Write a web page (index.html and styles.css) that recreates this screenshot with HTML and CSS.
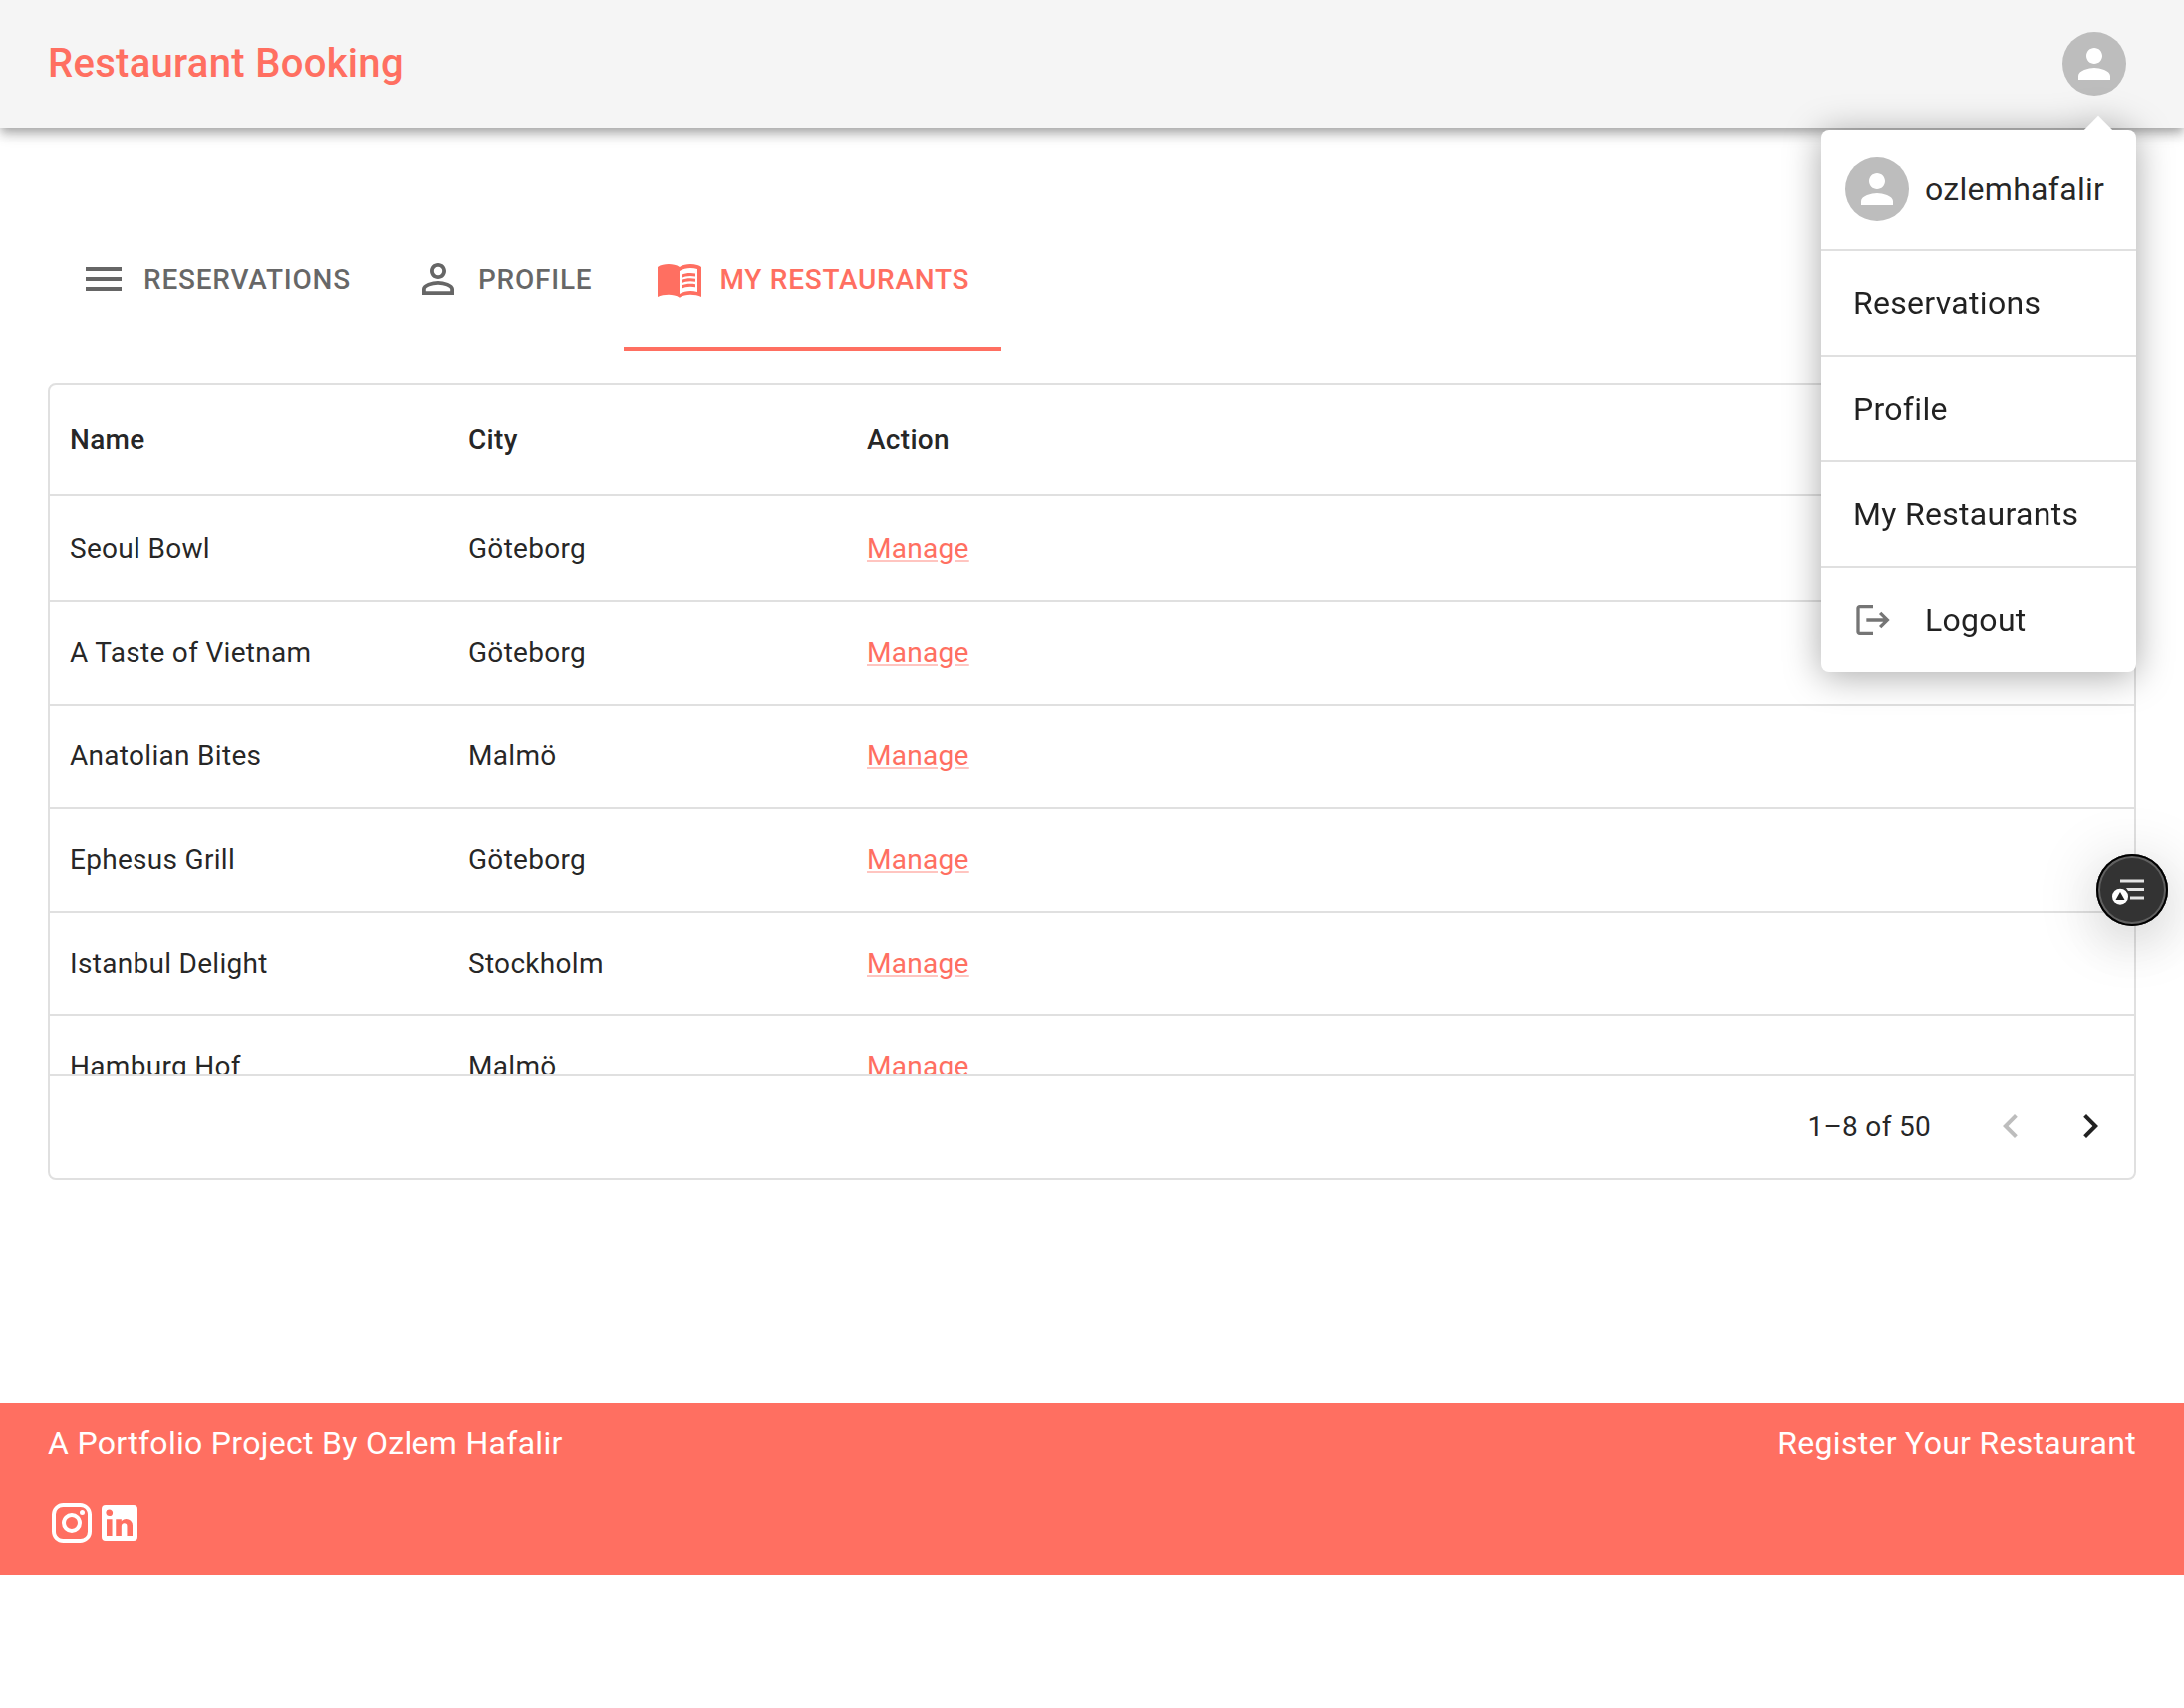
FILE: index.html
```html
<!DOCTYPE html>
<html lang="en">
<head>
<meta charset="utf-8">
<title>Restaurant Booking</title>
<link rel="stylesheet" href="styles.css">
</head>
<body>
<header class="app-bar">
  <a class="brand">Restaurant Booking</a>
  <span class="avatar"><svg class="icon" viewBox="0 0 24 24"><path d="M12 12c2.21 0 4-1.79 4-4s-1.79-4-4-4-4 1.79-4 4 1.79 4 4 4m0 2c-2.67 0-8 1.34-8 4v2h16v-2c0-2.66-5.33-4-8-4"/></svg></span>
</header>

<main class="content">
  <nav class="tabs">
    <a class="tab"><svg class="icon" viewBox="0 0 24 24"><path d="M3 18h18v-2H3zm0-5h18v-2H3zm0-7v2h18V6z"/></svg><span class="tab-label">Reservations</span></a>
    <a class="tab"><svg class="icon" viewBox="0 0 24 24"><path d="M12 5.9a2.1 2.1 0 1 1 0 4.2 2.1 2.1 0 0 1 0-4.2m0 9c2.97 0 6.1 1.46 6.1 2.1v1.1H5.9V17c0-.64 3.13-2.1 6.1-2.1M12 4C9.79 4 8 5.79 8 8s1.79 4 4 4 4-1.79 4-4-1.79-4-4-4m0 9c-2.67 0-8 1.34-8 4v3h16v-3c0-2.66-5.33-4-8-4"/></svg><span class="tab-label">Profile</span></a>
    <a class="tab tab-active"><svg class="icon" viewBox="0 0 24 24"><path d="M21 5c-1.11-.35-2.33-.5-3.5-.5-1.95 0-4.05.4-5.5 1.5-1.45-1.1-3.55-1.5-5.5-1.5S2.45 4.9 1 6v15c1.45-.7 3.55-1.1 5.5-1.1s4.05.4 5.5 1.5c1.45-1.1 3.55-1.5 5.5-1.5s4.05.4 5.5 1.1V6c-.6-.45-1.25-.75-2-1m0 13.5c-1.1-.35-2.3-.5-3.5-.5-1.7 0-4.15.65-5.5 1.5V8c1.35-.85 3.8-1.5 5.5-1.5 1.2 0 2.4.15 3.5.5z"/><path d="M17.5 10.5c.88 0 1.73.09 2.5.26V9.24c-.79-.15-1.64-.24-2.5-.24-1.7 0-3.24.29-4.5.83v1.66c1.13-.64 2.7-.99 4.5-.99M13 12.49v1.66c1.13-.64 2.7-.99 4.5-.99.88 0 1.73.09 2.5.26V11.9c-.79-.15-1.64-.24-2.5-.24-1.7 0-3.24.3-4.5.83m4.5 1.84c-1.7 0-3.24.29-4.5.83v1.66c1.13-.64 2.7-.99 4.5-.99.88 0 1.73.09 2.5.26v-1.52c-.79-.16-1.64-.24-2.5-.24"/></svg><span class="tab-label">My Restaurants</span></a>
  </nav>

  <section class="grid">
    <div class="row head"><span>Name</span><span>City</span><span>Action</span></div>
    <div class="rows">
      <div class="row"><span>Seoul Bowl</span><span>Göteborg</span><span><a class="link">Manage</a></span></div>
      <div class="row"><span>A Taste of Vietnam</span><span>Göteborg</span><span><a class="link">Manage</a></span></div>
      <div class="row"><span>Anatolian Bites</span><span>Malmö</span><span><a class="link">Manage</a></span></div>
      <div class="row"><span>Ephesus Grill</span><span>Göteborg</span><span><a class="link">Manage</a></span></div>
      <div class="row"><span>Istanbul Delight</span><span>Stockholm</span><span><a class="link">Manage</a></span></div>
      <div class="row"><span>Hamburg Hof</span><span>Malmö</span><span><a class="link">Manage</a></span></div>
    </div>
    <div class="pager">
      <span class="range">1–8 of 50</span>
      <span class="page-btn disabled"><svg class="icon" viewBox="0 0 24 24"><path d="M15.41 16.59 10.83 12l4.58-4.59L14 6l-6 6 6 6z"/></svg></span>
      <span class="page-btn"><svg class="icon" viewBox="0 0 24 24"><path d="M8.59 16.59 13.17 12 8.59 7.41 10 6l6 6-6 6z"/></svg></span>
    </div>
  </section>
</main>

<footer class="footer">
  <div class="footer-text"><span>A Portfolio Project By Ozlem Hafalir</span><a>Register Your Restaurant</a></div>
  <div class="social">
    <svg class="icon" viewBox="0 0 24 24"><path d="M7.8 2h8.4C19.4 2 22 4.6 22 7.8v8.4a5.8 5.8 0 0 1-5.8 5.8H7.8C4.6 22 2 19.4 2 16.2V7.8A5.8 5.8 0 0 1 7.8 2m-.2 2A3.6 3.6 0 0 0 4 7.6v8.8C4 18.39 5.61 20 7.6 20h8.8a3.6 3.6 0 0 0 3.6-3.6V7.6C20 5.61 18.39 4 16.4 4H7.6m9.65 1.5a1.25 1.25 0 0 1 1.25 1.25A1.25 1.25 0 0 1 17.25 8 1.25 1.25 0 0 1 16 6.75a1.25 1.25 0 0 1 1.25-1.25M12 7a5 5 0 0 1 5 5 5 5 0 0 1-5 5 5 5 0 0 1-5-5 5 5 0 0 1 5-5m0 2a3 3 0 0 0-3 3 3 3 0 0 0 3 3 3 3 0 0 0 3-3 3 3 0 0 0-3-3z"/></svg>
    <svg class="icon" viewBox="0 0 24 24"><path d="M19 3a2 2 0 0 1 2 2v14a2 2 0 0 1-2 2H5a2 2 0 0 1-2-2V5a2 2 0 0 1 2-2h14m-.5 15.5v-5.3a3.26 3.26 0 0 0-3.26-3.26c-.85 0-1.84.52-2.32 1.3v-1.11h-2.79v8.37h2.79v-4.93c0-.77.62-1.4 1.39-1.4a1.4 1.4 0 0 1 1.4 1.4v4.93h2.79M6.88 8.56a1.68 1.68 0 0 0 1.68-1.68c0-.93-.75-1.69-1.68-1.69a1.69 1.69 0 0 0-1.69 1.69c0 .93.76 1.68 1.69 1.68m1.39 9.94v-8.37H5.5v8.37h2.77z"/></svg>
  </div>
</footer>

<div class="menu">
  <div class="menu-item account"><span class="avatar"><svg class="icon" viewBox="0 0 24 24"><path d="M12 12c2.21 0 4-1.79 4-4s-1.79-4-4-4-4 1.79-4 4 1.79 4 4 4m0 2c-2.67 0-8 1.34-8 4v2h16v-2c0-2.66-5.33-4-8-4"/></svg></span>ozlemhafalir</div>
  <div class="menu-item">Reservations</div>
  <div class="menu-item">Profile</div>
  <div class="menu-item">My Restaurants</div>
  <div class="menu-item"><svg class="logout-icon" viewBox="0 0 24 24"><path d="m17 7-1.41 1.41L18.17 11H8v2h10.17l-2.58 2.58L17 17l5-5zM4 5h8V3H4c-1.1 0-2 .9-2 2v14c0 1.1.9 2 2 2h8v-2H4z"/></svg>Logout</div>
</div>

<div class="floating-button">
  <svg viewBox="0 0 72 72" width="72" height="72">
    <path d="M24 25.500h24v3H24zM30 34h18v3H32zM34 42.500h14v3H34z" fill="#e4e4e4"/>
    <circle cx="24" cy="42.700" r="8" fill="#fff"/>
    <path d="M24 38l4.500 8h-9z" fill="#222"/>
  </svg>
</div>
</body>
</html>
```
FILE: styles.css
```css
* {
  box-sizing: border-box;
}

body {
  margin: 0;
  min-height: 1714px;
  position: relative;
  overflow: hidden;
  background: #fff;
  color: rgba(0, 0, 0, 0.87);
  font-family: Roboto, "Liberation Sans", sans-serif;
  font-size: 32px;
  line-height: 1.5;
  letter-spacing: 0.00938em;
}

.icon {
  width: 48px;
  height: 48px;
  fill: currentColor;
  flex: none;
}

.app-bar {
  position: relative;
  height: 128px;
  padding: 0 58px 0 48px;
  display: flex;
  align-items: center;
  justify-content: space-between;
  background: #f5f5f5;
  box-shadow: 0 4px 8px -2px rgba(0, 0, 0, 0.2), 0 8px 10px rgba(0, 0, 0, 0.14), 0 2px 20px rgba(0, 0, 0, 0.12);
}

.brand {
  color: #ff6f61;
  font-size: 40px;
  font-weight: 500;
  line-height: 64px;
  letter-spacing: 0.0075em;
}

.avatar {
  width: 64px;
  height: 64px;
  border-radius: 50%;
  display: flex;
  align-items: center;
  justify-content: center;
  flex: none;
  background: #bdbdbd;
  color: #fff;
}

.content {
  padding: 80px 48px 224px;
}

.tabs {
  display: flex;
  height: 144px;
  margin-bottom: 32px;
}

.tab {
  display: flex;
  align-items: center;
  gap: 16px;
  padding: 0 32px;
  border-bottom: 4px solid transparent;
  border-top: 4px solid transparent;
  color: rgba(0, 0, 0, 0.6);
  font-size: 28px;
  font-weight: 500;
  letter-spacing: 0.0277em;
  text-transform: uppercase;
}

.tab-label {
  padding-top: 2px;
}

.tab-active {
  border-bottom-color: #ff6f61;
  color: #ff6f61;
  letter-spacing: 0.0265em;
}

.grid {
  height: 800px;
  display: flex;
  flex-direction: column;
  border: 2px solid #e0e0e0;
  border-radius: 8px;
  font-size: 28px;
  line-height: 1.43;
  letter-spacing: 0.01071em;
}

.row {
  display: grid;
  grid-template-columns: 400px 400px 1fr;
  align-items: center;
  height: 104px;
  flex: none;
  border-bottom: 2px solid #e0e0e0;
}

.row > span {
  padding: 0 20px;
}

.head {
  height: 112px;
  padding-top: 2px;
  font-weight: 500;
}

.rows {
  flex: 1;
  min-height: 0;
  overflow: hidden;
}

.rows .row:first-child {
  height: 106px;
  padding-top: 2px;
}

.link {
  color: #ff6f61;
  text-decoration: underline;
  text-decoration-color: rgba(255, 111, 97, 0.4);
}

.pager {
  height: 104px;
  flex: none;
  display: flex;
  align-items: center;
  justify-content: flex-end;
  padding-right: 4px;
  border-top: 2px solid #e0e0e0;
}

.range {
  margin-right: 40px;
}

.page-btn {
  display: flex;
  padding: 15px 16px 17px;
}

.disabled {
  color: rgba(0, 0, 0, 0.26);
}

.footer {
  height: 173px;
  padding: 16px 48px;
  background: #ff6f61;
  color: #fff;
}

.footer-text {
  display: flex;
  justify-content: space-between;
  margin-bottom: 32px;
}

.social {
  display: flex;
}

.menu {
  position: absolute;
  top: 130px;
  right: 48px;
  width: 316px;
  border-radius: 8px;
  background: #fff;
  filter: drop-shadow(0 4px 18px rgba(0, 0, 0, 0.34));
}

.menu::before {
  content: "";
  position: absolute;
  top: -10px;
  right: 28px;
  width: 20px;
  height: 20px;
  background: #fff;
  transform: rotate(45deg);
}

.menu-item {
  position: relative;
  display: flex;
  align-items: center;
  height: 106px;
  padding: 0 32px;
  border-bottom: 2px solid #e0e0e0;
  white-space: nowrap;
}

.menu-item:last-child {
  height: 104px;
  border-bottom: 0;
}

.account {
  height: 122px;
}

.account .avatar {
  margin: 0 16px 0 -8px;
}

.logout-icon {
  width: 40px;
  height: 40px;
  margin-right: 32px;
  fill: rgba(0, 0, 0, 0.54);
}

.floating-button {
  position: absolute;
  left: 2104px;
  top: 857px;
  width: 72px;
  height: 72px;
  border-radius: 50%;
  background: #333;
  box-shadow: inset 0 0 0 2px #000, inset 0 0 0 4px #606060, 0 8px 64px rgba(0, 0, 0, 0.18), 0 24px 48px rgba(0, 0, 0, 0.06);
}

.floating-button svg {
  display: block;
}
```
